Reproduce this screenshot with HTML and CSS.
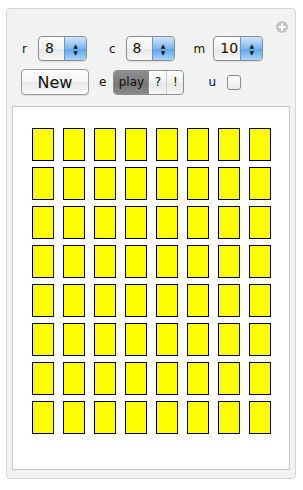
FILE: index.html
```html
<!DOCTYPE html>
<html lang="en">
<head>
    <meta charset="UTF-8">
    <title>Mines</title>
    <link rel="stylesheet" href="styles.css">
</head>
<body>
    <div class="panel">
        <span class="plus-icon">
            <svg width="12" height="12" viewBox="0 0 12 12">
                <circle cx="6" cy="6" r="6" fill="#c4c4c4"/>
                <rect x="5" y="2.5" width="2" height="7" fill="#fff"/>
                <rect x="2.5" y="5" width="7" height="2" fill="#fff"/>
            </svg>
        </span>

        <!-- setters -->
        <div class="controls-row">
            <span class="label label-r">r</span>
            <div class="spinner">
                <span class="spinner-value">8</span>
                <span class="spinner-arrows"><span class="up">&#9650;</span><span class="down">&#9660;</span></span>
            </div>
            <span class="label label-c">c</span>
            <div class="spinner">
                <span class="spinner-value">8</span>
                <span class="spinner-arrows"><span class="up">&#9650;</span><span class="down">&#9660;</span></span>
            </div>
            <span class="label label-m">m</span>
            <div class="spinner spinner-wide">
                <span class="spinner-value">10</span>
                <span class="spinner-arrows"><span class="up">&#9650;</span><span class="down">&#9660;</span></span>
            </div>
        </div>

        <div class="controls-row second">
            <button class="btn-new">New</button>
            <span class="label label-e">e</span>
            <div class="segmented">
                <span class="seg seg-active">play</span>
                <span class="seg seg-q">?</span>
                <span class="seg seg-x">!</span>
            </div>
            <span class="label label-u">u</span>
            <span class="checkbox"></span>
        </div>

        <!-- board -->
        <div class="board">
            <div class="grid" id="grid"></div>
        </div>
    </div>

    <script>
        var grid = document.getElementById('grid');
        for (var i = 0; i < 64; i++) {
            var cell = document.createElement('div');
            cell.className = 'cell';
            grid.appendChild(cell);
        }
    </script>
</body>
</html>
```

FILE: styles.css
```css
body {
    margin: 0;
    background: #ffffff;
    font-family: "DejaVu Sans", "Liberation Sans", sans-serif;
    color: #111;
}

.panel {
    position: relative;
    margin: 8px 0 0 6px;
    width: 288px;
    height: 469px;
    background: #f2f2f2;
    border: 1px solid #d4d4d4;
    border-radius: 4px;
    padding: 0;
    box-sizing: content-box;
}

.plus-icon {
    position: absolute;
    top: 9px;
    right: 7px;
    width: 12px;
    height: 12px;
}

.controls-row {
    display: flex;
    align-items: center;
    height: 25px;
    margin-top: 27px;
}

.controls-row.second {
    margin-top: 8px;
    height: 26px;
}

.label {
    font-size: 12px;
    line-height: 1;
}

.label-r { margin-left: 15px; margin-right: 11px; }
.label-c { margin-left: 22px; margin-right: 10px; }
.label-m { margin-left: 19px; margin-right: 8px; }
.label-e { margin-left: 10px; margin-right: 7px; }
.label-u { margin-left: 24px; margin-right: 11px; }

.spinner {
    display: flex;
    width: 47px;
    height: 23px;
    border: 1px solid #8e8e8e;
    border-radius: 4px;
    overflow: hidden;
    background: linear-gradient(#ffffff, #f1f1f1 50%, #e6e6e6 51%, #f7f7f7);
    box-shadow: 0 1px 1px rgba(0, 0, 0, 0.08);
}

.spinner-wide {
    width: 48px;
}

.spinner-value {
    flex: 1;
    font-size: 14px;
    line-height: 23px;
    padding-left: 6px;
}

.spinner-arrows {
    width: 21px;
    display: flex;
    flex-direction: column;
    align-items: center;
    justify-content: center;
    background: linear-gradient(#cfe5fb, #7fb7ef 50%, #5aa2ec 51%, #a9d4fb);
    border-left: 1px solid #6a97c6;
    font-size: 6px;
    line-height: 7px;
    color: #1a1a1a;
}

.btn-new {
    margin-left: 14px;
    width: 68px;
    height: 26px;
    border: 1px solid #9c9c9c;
    border-radius: 4px;
    background: linear-gradient(#ffffff, #f3f3f3 50%, #e8e8e8 51%, #fafafa);
    font-family: "DejaVu Sans", sans-serif;
    font-size: 16px;
    color: #111;
    padding: 0;
    box-shadow: 0 1px 1px rgba(0, 0, 0, 0.1);
}

.segmented {
    display: flex;
    height: 23px;
    border: 1px solid #8e8e8e;
    border-radius: 4px;
    overflow: hidden;
    background: linear-gradient(#ffffff, #f1f1f1 50%, #e6e6e6 51%, #f7f7f7);
}

.seg {
    font-size: 12px;
    line-height: 23px;
    text-align: center;
}

.seg-active {
    width: 34px;
    background: linear-gradient(#8e8e8e, #7e7e7e 50%, #747474 51%, #8a8a8a);
    color: #111;
}

.seg-q {
    width: 17px;
    border-left: 1px solid #8e8e8e;
}

.seg-x {
    width: 16px;
    border-left: 1px solid #d0d0d0;
}

.checkbox {
    width: 12px;
    height: 13px;
    border: 1px solid #8a8a8a;
    border-radius: 3px;
    background: linear-gradient(#ffffff, #ececec);
}

.board {
    margin: 11px 5px 0 5px;
    height: 362px;
    background: #ffffff;
    border: 1px solid #c8c8c8;
}

.grid {
    display: grid;
    grid-template-columns: repeat(8, 22px);
    grid-auto-rows: 33px;
    column-gap: 9px;
    row-gap: 6px;
    padding: 21px 0 0 19px;
}

.cell {
    background: #ffff00;
    border: 1px solid #000;
    box-sizing: border-box;
}
```
